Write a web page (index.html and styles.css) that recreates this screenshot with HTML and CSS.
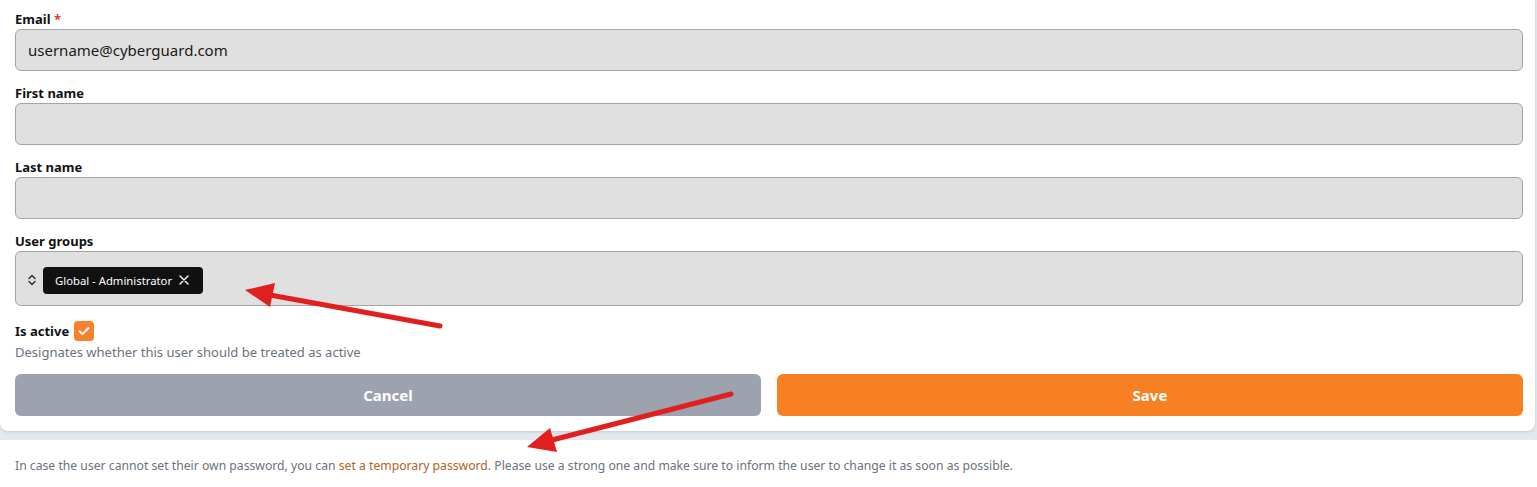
FILE: index.html
```html
<!DOCTYPE html>
<html lang="en">
<head>
<meta charset="utf-8">
<title>Edit user</title>
<link rel="stylesheet" href="styles.css">
</head>
<body>
<div class="page">
  <form class="card form-card">
    <div class="field">
      <label class="label">Email <span class="req">*</span></label>
      <div class="input">username@cyberguard.com</div>
    </div>
    <div class="field">
      <label class="label">First name</label>
      <div class="input"></div>
    </div>
    <div class="field">
      <label class="label">Last name</label>
      <div class="input"></div>
    </div>
    <div class="field">
      <label class="label">User groups</label>
      <div class="input select">
        <svg class="chev" width="10" height="12" viewBox="0 0 10 12"><path d="M2 4.5 L5 1.5 L8 4.5 M2 7.5 L5 10.5 L8 7.5" fill="none" stroke="#222" stroke-width="1.2" stroke-linecap="round" stroke-linejoin="round"/></svg>
        <span class="chip">Global - Administrator <svg class="x" width="10" height="10" viewBox="0 0 10 10"><path d="M1 1 L9 9 M9 1 L1 9" stroke="#fff" stroke-width="1.4" stroke-linecap="round"/></svg></span>
      </div>
    </div>
    <div class="active-row">
      <span class="label inline">Is active</span>
      <span class="checkbox"><svg width="12" height="10" viewBox="0 0 12 10"><path d="M1.5 5.2 L4.5 8 L10.5 2" fill="none" stroke="#fff" stroke-width="2" stroke-linecap="round" stroke-linejoin="round"/></svg></span>
    </div>
    <p class="help">Designates whether this user should be treated as active</p>
    <div class="actions">
      <button type="button" class="btn btn-cancel">Cancel</button>
      <button type="button" class="btn btn-save">Save</button>
    </div>
  </form>
  <div class="card note-card">
    <p class="note">In case the user cannot set their own password, you can <a class="link" href="#">set a temporary password</a>. Please use a strong one and make sure to inform the user to change it as soon as possible.</p>
  </div>
  <svg class="arrows" width="1537" height="487" viewBox="0 0 1537 487">
    <line x1="440" y1="326" x2="270" y2="295" stroke="#e21f1f" stroke-width="5" stroke-linecap="round"/>
    <polygon points="245,290 275,283 270,307" fill="#e21f1f"/>
    <line x1="731" y1="394" x2="552" y2="440" stroke="#e21f1f" stroke-width="5" stroke-linecap="round"/>
    <polygon points="527,447 550,428 557,452" fill="#e21f1f"/>
  </svg>
</div>
</body>
</html>
```
FILE: styles.css
```css
* { box-sizing: border-box; }
html, body { margin: 0; padding: 0; }
body {
  background: #e3e7ee;
  font-family: "Noto Sans", "Open Sans", sans-serif;
  color: #111;
  width: 1537px;
  height: 487px;
  overflow: hidden;
}
.page { position: relative; width: 1537px; height: 487px; }
.card { background: #fff; }
.form-card {
  width: 1535px;
  padding: 9px 12px 15px 15px;
  border-radius: 0 0 8px 8px;
  box-shadow: 0 1px 3px rgba(0,0,0,0.12);
  display: flex;
  flex-direction: column;
}
.field { display: flex; flex-direction: column; margin-bottom: 12px; }
.label {
  font-size: 13px;
  font-weight: 700;
  line-height: 20px;
  height: 20px;
  color: #111;
}
.req { color: #e53935; }
.input {
  height: 42px;
  background: #e0e0e0;
  border: 1px solid #a3a3a3;
  border-radius: 6px;
  padding: 0 12px;
  font-size: 15px;
  display: flex;
  align-items: center;
  color: #1a1a1a;
}
.select { height: 55px; padding-left: 11px; gap: 6px; }
.chev { flex: none; margin-top: 3px; }
.chip {
  display: inline-flex;
  align-items: center;
  gap: 7px;
  height: 27px;
  background: #111;
  color: #fff;
  border-radius: 4px;
  padding: 0 14px 0 12px;
  font-size: 11.3px;
  margin-top: 4px;
}
.x { margin-top: -1px; }
.active-row { display: flex; align-items: center; gap: 5px; margin-top: 3px; height: 20px; }
.checkbox {
  width: 20px; height: 20px;
  background: #f7822a;
  border-radius: 4px;
  display: inline-flex; align-items: center; justify-content: center;
}
.help { margin: 2px 0 0; font-size: 13px; line-height: 18px; color: #6b7280; }
.actions { display: flex; gap: 16px; margin-top: 13px; }
.btn {
  flex: 1;
  height: 42px;
  border: 0;
  border-radius: 6px;
  font-family: inherit;
  font-size: 15px;
  font-weight: 700;
  color: #fff;
}
.btn-cancel { background: #9ca3af; }
.btn-save { background: #f78023; }
.note-card { margin-top: 9px; padding: 17px 15px 0; height: 56px; }
.note { margin: 0; font-size: 12.2px; line-height: 18px; color: #6b7280; }
.link { color: #b3621f; text-decoration: none; }
.arrows { position: absolute; left: 0; top: 0; pointer-events: none; }
```
